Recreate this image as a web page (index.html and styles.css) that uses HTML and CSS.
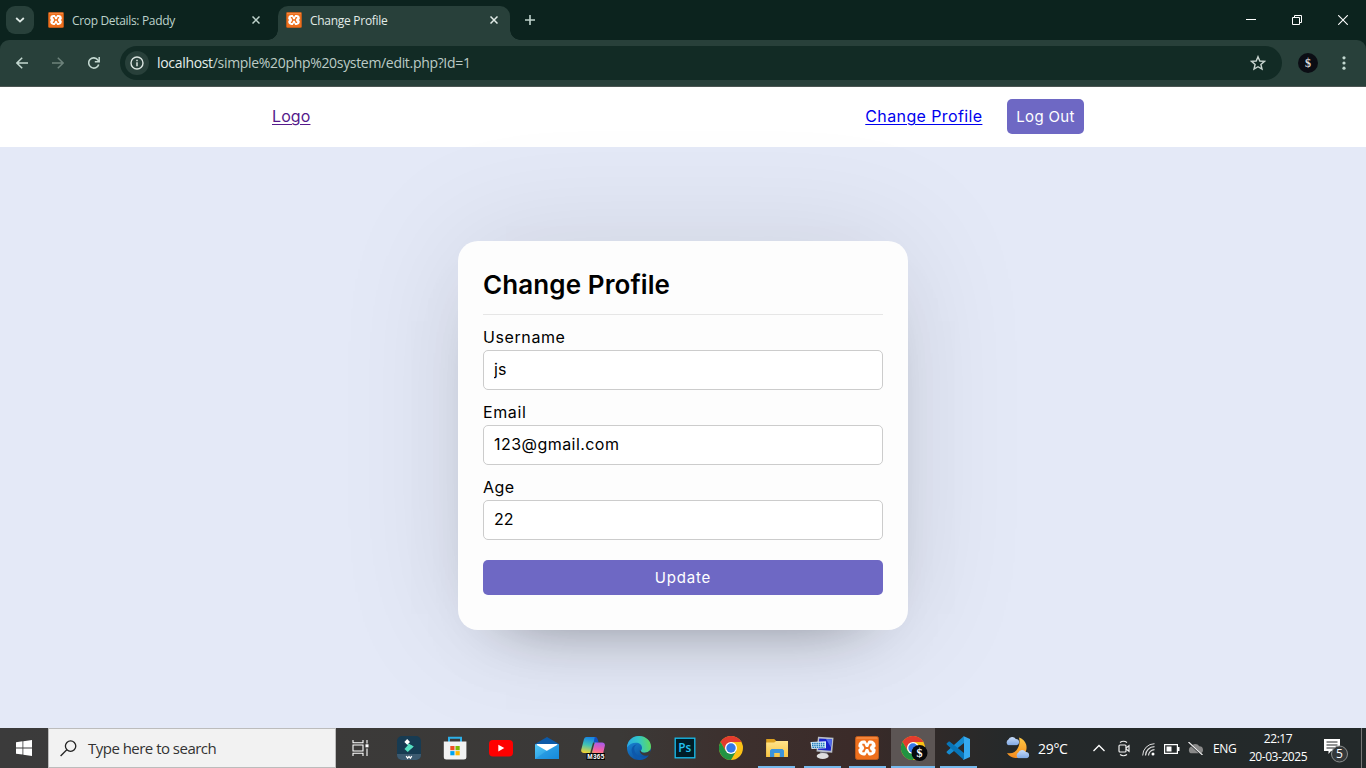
FILE: index.html
```html
<!DOCTYPE html>
<html lang="en">
<head>
<meta charset="utf-8">
<title>Change Profile</title>
<link rel="stylesheet" href="styles.css">
</head>
<body>
<svg class="defs" width="0" height="0" aria-hidden="true">
  <defs>
    <linearGradient id="edgeA" x1="0" y1="0.5" x2="1" y2="0.4"><stop offset="0" stop-color="#2aa9e4"/><stop offset="0.5" stop-color="#32c6c8"/><stop offset="1" stop-color="#62da57"/></linearGradient>
    <linearGradient id="edgeB" x1="0" y1="0" x2="0.6" y2="1"><stop offset="0" stop-color="#1b91df"/><stop offset="1" stop-color="#0c4d9b"/></linearGradient>
    <linearGradient id="copA" x1="0.5" y1="0" x2="0.3" y2="1"><stop offset="0" stop-color="#1684e5"/><stop offset="0.5" stop-color="#42c3b3"/><stop offset="1" stop-color="#f2d332"/></linearGradient>
    <linearGradient id="copB" x1="0.6" y1="0" x2="0.4" y2="1"><stop offset="0" stop-color="#a85ae8"/><stop offset="0.6" stop-color="#ee5eab"/><stop offset="1" stop-color="#ff8c70"/></linearGradient>
    <linearGradient id="mailG" x1="0" y1="0" x2="1" y2="1"><stop offset="0" stop-color="#53c8f6"/><stop offset="1" stop-color="#168bdc"/></linearGradient>
    <linearGradient id="foldG" x1="0" y1="0" x2="0" y2="1"><stop offset="0" stop-color="#ffe48b"/><stop offset="1" stop-color="#f8c544"/></linearGradient>
    <linearGradient id="moonG" x1="0" y1="0" x2="0" y2="1"><stop offset="0" stop-color="#ffc945"/><stop offset="1" stop-color="#f48a1d"/></linearGradient>
    <linearGradient id="cloudG" x1="0" y1="0" x2="0" y2="1"><stop offset="0" stop-color="#c8dcf8"/><stop offset="1" stop-color="#7fa8e3"/></linearGradient>
    <symbol id="xampp" viewBox="0 0 24 24">
      <rect x="0.5" y="0.5" width="23" height="23" rx="2" fill="#ee6f1c" stroke="#bd5a1c"/>
      <path d="M1.5 2h21" stroke="#fa9c5b"/>
      <rect x="3.4" y="4.6" width="17.2" height="14.8" rx="5" fill="#fff"/>
      <path d="M10 4h4l-2 3.4zM10 20h4l-2-3.4zM3 10.600l2 1.400-2 1.400zM21 10.600 19 12l2 1.400z" fill="#ee6f1c"/>
      <path d="M7.300 8.600h1.500l1.500 3.400-1.500 3.400H7.300M16.700 8.600h-1.500L13.700 12l1.500 3.400h1.500M10 12h4" fill="none" stroke="#ee6f1c" stroke-width="1.900"/>
    </symbol>
    <symbol id="chrome" viewBox="0 0 24 24">
      <circle cx="12" cy="12" r="12" fill="#fbc116"/>
      <path d="M12 6h10.4A12 12 0 0 0 1.6 6l5.2 9z" fill="#e33b2e"/>
      <path d="M1.6 6A12 12 0 0 0 12 24l5.2-9H6.8z" fill="#229342"/>
      <circle cx="12" cy="12" r="6" fill="#fff"/><circle cx="12" cy="12" r="4.7" fill="#3478e8"/>
    </symbol>
    <symbol id="cloud" viewBox="0 0 18 11"><path d="M4 11a4 4 0 0 1 0-7 5 5 0 0 1 9-.5A3.8 3.8 0 0 1 14 11z"/></symbol>
  </defs>
</svg>

<header class="browser">
  <div class="tabs">
    <button class="tabsearch" aria-label="Search tabs"><svg width="10" height="6" viewBox="0 0 10 6"><path d="M1.2 1 5 4.6 8.8 1" fill="none" stroke="#dfeae6" stroke-width="1.8"/></svg></button>
    <div class="tab idle">
      <svg width="16" height="16"><use href="#xampp"/></svg><span class="title t1">Crop Details: Paddy</span>
      <svg class="x" width="8" height="8" viewBox="0 0 8 8"><path d="M.5.5l7 7M7.5.5l-7 7" stroke="#bfd3cc" stroke-width="1.5"/></svg>
    </div>
    <div class="tab active">
      <svg width="16" height="16"><use href="#xampp"/></svg><span class="title t2">Change Profile</span>
      <svg class="x" width="8" height="8" viewBox="0 0 8 8"><path d="M.5.5l7 7M7.5.5l-7 7" stroke="#e2ebe7" stroke-width="1.5"/></svg>
    </div>
    <svg class="plus" width="10" height="10" viewBox="0 0 10 10"><path d="M5 0v10M0 5h10" stroke="#bfd3cc" stroke-width="1.6"/></svg>
    <div class="winctl">
      <svg width="10" height="10" viewBox="0 0 10 10"><path d="M0 4.5h10" stroke="#fff"/></svg>
      <svg width="10" height="10" viewBox="0 0 10 10"><path d="M.5 2.5h7v7h-7zM2.5 2.5v-2h7v7h-2" fill="none" stroke="#fff"/></svg>
      <svg width="10" height="10" viewBox="0 0 10 10"><path d="M.2.2l9.6 9.6M9.8.2.2 9.8" stroke="#fff" stroke-width="1.1"/></svg>
    </div>
  </div>
  <div class="toolbar">
    <svg width="12" height="12" viewBox="0 0 12 12"><path d="M12 6H1M6.2.7.9 6l5.3 5.3" fill="none" stroke="#c3d8d0" stroke-width="1.5"/></svg>
    <svg width="12" height="12" viewBox="0 0 12 12"><path d="M0 6h11M5.8.7 11.1 6l-5.3 5.3" fill="none" stroke="#6d827b" stroke-width="1.5"/></svg>
    <svg width="12" height="12" viewBox="0 0 12 12"><path d="M10.7 7.4A5.1 5.1 0 1 1 9.9 2.9L11 4.2" fill="none" stroke="#c3d8d0" stroke-width="1.6"/><path d="M11.2 0v4.7H6.8" fill="none" stroke="#c3d8d0" stroke-width="1.5"/></svg>
    <div class="omnibox">
      <span class="info"><svg width="14" height="14" viewBox="0 0 14 14"><circle cx="7" cy="7" r="6" fill="none" stroke="#dbe5e1" stroke-width="1.4"/><path d="M7 6.2v4M7 3.7v1.5" stroke="#dbe5e1" stroke-width="1.5"/></svg></span>
      <span class="url"><b>localhost</b>/simple%20php%20system/edit.php?Id=1</span>
      <svg class="star" width="16" height="16" viewBox="0 0 16 16"><path d="M8 1.7 9.8 6l4.7.4-3.6 3.1 1.1 4.6L8 11.7l-4 2.4 1.1-4.6L1.5 6.4 6.2 6z" fill="none" stroke="#c9d5d0" stroke-width="1.4"/></svg>
    </div>
    <span class="avatar">$</span>
    <svg class="dots" width="4" height="14" viewBox="0 0 4 14" fill="#c3d8d0"><circle cx="2" cy="1.8" r="1.6"/><circle cx="2" cy="7" r="1.6"/><circle cx="2" cy="12.2" r="1.6"/></svg>
  </div>
</header>

<main class="page">
  <nav class="nav">
    <a class="logo" href="#home">Logo</a>
    <a class="change" href="#edit">Change Profile</a>
    <button class="btn logout">Log Out</button>
  </nav>
  <div class="container">
    <form class="box">
      <h1>Change Profile</h1>
      <div class="field"><label class="l-user" for="u">Username</label><input id="u" class="i-user" value="js"></div>
      <div class="field"><label class="l-mail" for="e">Email</label><input id="e" class="i-mail" value="123@gmail.com"></div>
      <div class="field"><label class="l-age" for="a">Age</label><input id="a" class="i-age" value="22"></div>
      <button class="btn update" type="button">Update</button>
    </form>
  </div>
</main>

<footer class="taskbar">
  <div class="start"><svg width="16" height="16" viewBox="0 0 16 16" fill="#fff"><path d="M0 2.2 6.5 1.3v6.2H0zM7.3 1.2 16 0v7.5H7.3zM0 8.4h6.5v6.2L0 13.7zM7.3 8.4H16V16l-8.7-1.2z"/></svg></div>
  <div class="search"><svg width="17" height="17" viewBox="0 0 17 17"><circle cx="10.6" cy="6.1" r="5.2" fill="none" stroke="#222" stroke-width="1.3"/><path d="M6.8 9.8.6 16" stroke="#222" stroke-width="1.3"/></svg><span>Type here to search</span></div>
  <div class="apps">
    <div class="app first"><svg width="18" height="16" viewBox="0 0 18 16" fill="none" stroke="#fff" stroke-width="1.1"><path d="M1 0v2.7h10V0M1 16v-2.7h10V16M1 5h10v6H1zM15 0v3.5M15 8.5V16"/><path d="M13.5 4.3h3v3h-3z" fill="#fff" stroke="none"/></svg></div>
    <div class="app"><svg width="24" height="24" viewBox="0 0 24 24"><rect width="24" height="24" rx="5" fill="#173b52"/><path d="M0 18h24v1a5 5 0 0 1-5 5H5a5 5 0 0 1-5-5z" fill="#3c5a70"/><path d="m12 8 4.700 2.600-6 5.300-3.200-3z" fill="#55dfc1"/><path d="m8.500 6 8 4.500-3 2.500z" fill="#55dfc1"/><path d="M10.2 3.1 13 5.9 10.2 8.7 7.4 5.9z" fill="#fff"/><path d="M9.2 20.2l1.4 2 1.4-1.6 1.4 1.6 1.4-2" fill="none" stroke="#fff" stroke-width="1.3"/></svg></div>
    <div class="app"><svg width="24" height="24" viewBox="0 0 24 24"><path d="M6 6V1.8h12V6" fill="none" stroke="#2db0e8" stroke-width="2"/><path d="M.8 5.5h22.6V21a2.5 2.5 0 0 1-2.5 2.5H3.3A2.5 2.5 0 0 1 .8 21z" fill="#f2f2f2"/><path fill="#f04e23" d="M7.3 10h4.2v4.2H7.3z"/><path fill="#7eb900" d="M12.5 10h4.2v4.2h-4.2z"/><path fill="#00a3ef" d="M7.3 15.1h4.2v4.2H7.3z"/><path fill="#ffb800" d="M12.5 15.1h4.2v4.2h-4.2z"/></svg></div>
    <div class="app"><svg width="24" height="24" viewBox="0 0 24 24"><rect y="4" width="24" height="16.5" rx="4" fill="#f00"/><path d="m9.3 8.8 6 3.3-6 3.3z" fill="#fff"/></svg></div>
    <div class="app"><svg width="24" height="24" viewBox="0 0 24 24"><path d="M0 8 12 1l12 7v5H0z" fill="#0c5aa8"/><path d="M1.500 8h21v7h-21z" fill="#fff"/><path d="M0 8l12 7 12-7v15H0z" fill="url(#mailG)"/><path d="m0 23 12-8.4L24 8v15z" fill="#1687d9" opacity=".45"/></svg></div>
    <div class="app"><svg width="24" height="24" viewBox="0 0 24 24"><path d="M5.5 1h8a2.6 2.6 0 0 1 2.5 3.4L13 15a3 3 0 0 1-3 2H3c-2.2 0-3.3-1.5-2.7-3.6L3 3a3 3 0 0 1 2.5-2z" fill="url(#copA)"/><path d="M13.8 1c2 0 2.6 1.3 3.1 3l.8 2.6h-5.1z" fill="#144fc2"/><path d="M14.4 6.6h6.8c2 0 3.1 1.6 2.6 3.4L22 18H11l2-9z" fill="url(#copB)"/><path d="m12.800 6.600-2.800 10.400" stroke="#3b3937" stroke-width="1.500"/><rect x="5.5" y="17" width="18.5" height="7" fill="#050505"/><text x="6.3" y="22.8" class="m365" textLength="17">M365</text></svg></div>
    <div class="app"><svg width="24" height="24" viewBox="0 0 24 24"><circle cx="12" cy="12" r="12" fill="url(#edgeB)"/><path d="M0 11.5C.5 4.5 5.6 0 12 0c7 0 12 5 12 10.6 0 4-3 6.2-6.3 6.2-2.6 0-4-1-3.8-2 .2-.7 1.1-1.2 1.1-3 0-3-2.7-5-6.2-5C5 6.800 2 8.600 0 11.500z" fill="url(#edgeA)"/><path d="M9.800 8.500c-2 1-3 3-2.400 5.800.9 4.200 5 7.400 9.600 7.100 2.500-.2 4.200-1.100 5.600-2.600-2.100 3.100-5.800 5.200-10.200 5.200C6 22 3.600 15 5 12c1-2.300 3-3.500 4.800-3.500z" fill="#0d58ab"/><path d="M14 14.700c-.2 1.200 1.400 2.100 3.700 2.100 2.300 0 4.200-.9 5.400-2.500l.9 2.600-2.100 2.400c-4.200 1.100-8.300-.3-9.400-4.600z" fill="#3b3937"/></svg></div>
    <div class="app"><svg width="22" height="22" viewBox="0 0 22 22"><rect x="1.200" y="1.200" width="19.600" height="19.600" fill="#001d27" stroke="#18bff0" stroke-width="1.300"/><text x="4.300" y="15.300" class="ps" textLength="13" lengthAdjust="spacingAndGlyphs">Ps</text></svg></div>
    <div class="app"><svg width="24" height="24"><use href="#chrome"/></svg></div>
    <div class="app run"><svg width="24" height="24" viewBox="0 0 24 24"><path d="M1.200 3h8l2 2H23v16H1.200z" fill="#dca01f"/><path d="M1.200 6.500h8l2-1.500H23v16H1.200z" fill="url(#foldG)"/><path d="M5 21v-6.500L6.500 13h11l1.500 1.500V21h-4.200v-4H9.200v4z" fill="#3b94dc"/></svg></div>
    <div class="app run"><svg width="24" height="24" viewBox="0 0 24 24"><path d="m8 .8 15.500 1-1.300 15-15.700-1.300z" fill="#b9bfca"/><path d="m9.300 2.500 12.600.8-1.100 11.500-12.800-1z" fill="#1721ca"/><path d="M16 3l6 .3-1.100 8z" fill="#4f6bec"/><path d="m10 16 7 .5 1 3h-7z" fill="#7d828d"/><ellipse cx="12.700" cy="20" rx="6" ry="3" fill="#dedede"/><path d="m.5 6 15.500-.7v7L1.500 13z" fill="#d7edfa"/><path d="M2 7.500h13M2 9.500h13M2.500 11.400h12" stroke="#237dbb" stroke-width="1.300" stroke-dasharray="1.500 .7"/></svg></div>
    <div class="app run"><svg width="24" height="24"><use href="#xampp"/></svg></div>
    <div class="app run current"><svg width="27" height="26" viewBox="0 0 27 26"><svg y="1" width="24" height="24"><use href="#chrome"/></svg><circle cx="18.500" cy="18" r="8" fill="#07080b"/><text x="18.500" y="22" text-anchor="middle" class="dollar">$</text></svg></div>
    <div class="app run"><svg width="24" height="24" viewBox="0 0 24 24"><path d="M18 0 1 15.300c-.6.500-.6 1.100 0 1.600l1.300 1.200c.5.500 1 .5 1.600.1L18 7z" fill="#168bd0"/><path d="M18 24 1 8.700c-.6-.500-.6-1.100 0-1.600l1.300-1.200c.5-.500 1-.5 1.600-.1L18 17z" fill="#0875b8"/><path d="M17.300 0 24 3v18l-6.700 3c-.7.100.7-.6.700-1.700V1.700C18 .6 17.300 0 17.300 0z" fill="#35a9ef"/></svg></div>
  </div>
  <div class="tray">
    <svg class="weather" width="25" height="24" viewBox="0 0 25 24"><path d="M14 1.500a10.500 10.500 0 1 1-12 15.400c7.500 2.600 14.600-5.900 12-15.400z" fill="url(#moonG)"/><use href="#cloud" x="0" y="0" width="15" height="9.500" fill="url(#cloudG)"/><use href="#cloud" x="10" y="13" width="15" height="9.500" fill="url(#cloudG)"/></svg>
    <span class="temp">29°C</span>
    <svg class="chev" width="12" height="8" viewBox="0 0 12 8"><path d="M.5 7 6 1.500 11.500 7" fill="none" stroke="#fff" stroke-width="1.300"/></svg>
    <svg class="meet" width="13" height="17" viewBox="0 0 13 17" fill="none" stroke="#eee" stroke-width="1.200"><path d="M2 2.500q3.500-2.500 7 0M2 14.500q3.500 2.500 7 0"/><rect x="1" y="5" width="7" height="7" rx="1"/><path d="m8 8 3-2.200v5.400L8 9"/></svg>
    <svg class="wifi" width="13" height="13" viewBox="0 0 13 13" fill="none" stroke="#ddd"><path d="M.7 12.500A11.800 11.800 0 0 1 12.500.7"/><path d="M3.500 12.500a9 9 0 0 1 9-8.800M6.500 12.500a6 6 0 0 1 6-5.800" stroke-width="1.200"/><circle cx="11" cy="11" r="1.500" fill="#fff" stroke="none"/></svg>
    <svg class="batt" width="16" height="10" viewBox="0 0 16 10"><path d="M.6.6h12.800v8.800H.6z" fill="none" stroke="#fff" stroke-width="1.200"/><path d="M2.500 2.500h5v5h-5zM14 3h1.500v4H14z" fill="#fff"/></svg>
    <svg class="onedrive" width="17" height="13" viewBox="0 0 17 13"><use href="#cloud" y="1" width="17" height="10.500" fill="#898989"/><path d="m1 0 14 13" stroke="#25282a" stroke-width="2"/><path d="m1.500 0 14 13" stroke="#eee" stroke-width="1.200"/></svg>
    <span class="lang">ENG</span>
    <div class="clock"><span class="time">22:17</span><span class="date">20-03-2025</span></div>
    <svg class="note" width="26" height="26" viewBox="0 0 26 26"><path d="M1 2h16v12H8l-2.500 3v-3H1z" fill="#fff"/><path d="M3.500 5h11M3.500 8h11M3.500 11h8" stroke="#24292a"/><circle cx="16.500" cy="17" r="8" fill="#34383a" stroke="#8b8e8e"/><text x="16.500" y="21.200" text-anchor="middle" class="five">5</text></svg>
  </div>
</footer>
</body>
</html>
```
FILE: styles.css
```css
* { box-sizing: border-box; margin: 0; padding: 0; }
body { width: 1366px; height: 768px; overflow: hidden; display: flex; flex-direction: column; font-family: "Open Sans", "Noto Sans", sans-serif; }
.defs { position: absolute; }
svg { display: block; flex: none; }
button { border: 0; }

/* Browser frame */
.browser { height: 87px; background: #0c231e; border-bottom: 1px solid #4b5552; flex: none; }
.tabs { height: 40px; display: flex; align-items: center; padding-left: 6px; }
.tabsearch { width: 28px; height: 28px; border-radius: 9px; background: #28403a; display: grid; place-items: center; }
.tab { display: flex; align-items: center; font-size: 12px; white-space: nowrap; }
.title { flex: 1; margin-left: 8px; }
.idle { width: 244px; padding: 0 18px 0 14px; color: #bdd2cb; }
.t1 { letter-spacing: -.33px; }
.t2 { letter-spacing: -.28px; }
.active { width: 232px; height: 34px; align-self: flex-end; padding: 0 12px 6px 8px; border-radius: 10px 10px 0 0; background: #28403a; color: #e2ebe7; position: relative; }
.active::before, .active::after { content: ""; position: absolute; bottom: 0; width: 10px; height: 10px; }
.active::before { left: -10px; background: radial-gradient(circle at 0 0, transparent 9.500px, #28403a 10px); }
.active::after { right: -10px; background: radial-gradient(circle at 100% 0, transparent 9.500px, #28403a 10px); }
.plus { margin-left: 15px; }
.winctl { margin-left: auto; padding-right: 18px; display: flex; gap: 36px; }
.toolbar { height: 46px; display: flex; align-items: center; padding: 0 20px 0 16px; gap: 24px; background: #28403a; border-radius: 9px 9px 0 0; }
.omnibox { width: 1162px; height: 34px; margin-left: -4px; border-radius: 17px; background: #122b25; display: flex; align-items: center; padding: 0 16px 0 5px; }
.info { width: 24px; height: 24px; border-radius: 50%; background: #28403a; display: grid; place-items: center; }
.url { flex: 1; margin-left: 8px; padding-bottom: 1px; font-size: 14px; letter-spacing: -.32px; color: #bccbc5; }
.url b { font-weight: 400; color: #e5eeea; }
.avatar { width: 20px; height: 20px; margin-left: -8px; border-radius: 50%; background: #0b0d14; color: #ddd; font: bold 12px/20px "Liberation Serif", serif; text-align: center; }
.dots { margin-left: auto; }

/* Page */
.page { height: 641px; background: #e4e9f7; font-family: Inter, sans-serif; font-size: 16px; overflow: hidden; }
.nav { height: 60px; display: flex; align-items: center; padding: 0 282px 2px 272px; background: #fff; }
.logo { color: #551a8b; margin-right: auto; letter-spacing: .1px; }
.change { color: #0000ee; margin-right: 24.600px; letter-spacing: .38px; }
.nav a { text-underline-offset: 2px; text-decoration-thickness: 1px; }
.btn { height: 35px; border-radius: 5px; background: rgba(76,68,182,.808); color: #fff; font: 15px Inter, sans-serif; }
.logout { width: 77px; letter-spacing: .35px; }
.container { height: 581px; display: flex; justify-content: center; align-items: flex-start; padding-top: 94px; }
.box { width: 450px; height: 389px; padding: 25px; border-radius: 20px; background: #fdfdfd; box-shadow: 0 0 128px 0 rgba(0,0,0,.1), 0 32px 64px -48px rgba(0,0,0,.5); }
.box h1 { height: 49px; border-bottom: 1px solid #e6e6e6; margin-bottom: 10px; font-size: 26px; line-height: 37px; font-weight: 600; letter-spacing: .1px; }
.field { height: 65px; margin-bottom: 10px; display: flex; flex-direction: column; }
.field label { line-height: 25px; }
.field input { height: 40px; border: 1px solid #ccc; border-radius: 5px; padding: 0 10px 2px; font: 16px Inter, sans-serif; color: #000; background: #fff; }
.l-user { letter-spacing: .6px; }
.l-mail { letter-spacing: .6px; }
.l-age { letter-spacing: .5px; }
.field .i-mail { letter-spacing: .45px; }
.update { width: 100%; margin-top: 20px; display: block; letter-spacing: .8px; }

/* Taskbar */
.taskbar { height: 40px; display: flex; color: #fff; background: linear-gradient(90deg, #3b3b3b 0, #3b3937 620px, #3c302e 730px, #3b2b29 850px, #302928 930px, #25292a 1010px, #23292a 1366px); }
.start { width: 48px; display: grid; place-items: center; }
.search { width: 288px; display: flex; align-items: center; padding-left: 11px; gap: 11px; background: #f2f2f2; border: 1px solid #bcbcbc; color: #333; font-size: 15px; }
.search span { letter-spacing: -.52px; white-space: nowrap; }
.apps { width: 644px; margin-left: 1px; display: flex; }
.app { width: 46px; flex: none; display: flex; align-items: center; justify-content: center; }
.first { width: 49px; padding-right: 2px; }
.run { width: 45.400px; background: linear-gradient(#76b9ed, #76b9ed) center bottom / 37px 2px no-repeat; }
.current { width: 44px; margin: 0 .7px; padding-left: 3px; background: linear-gradient(#76b9ed, #76b9ed) bottom / 100% 2px no-repeat, #5c5554; }
.m365 { font: bold 6.500px "Liberation Sans", sans-serif; fill: #fff; }
.ps { font: 600 12px "Open Sans", sans-serif; fill: #22c3f3; }
.dollar { font: bold 12px "Liberation Serif", serif; fill: #fff; }
.tray { flex: 1; display: flex; align-items: center; margin-right: 4px; border-right: 1px solid #777; white-space: nowrap; }
.weather { margin-left: 24px; }
.temp { width: 48px; margin-left: 8px; font-size: 14px; letter-spacing: -.3px; }
.chev { margin-left: 7px; }
.meet { margin-left: 13px; }
.wifi { margin-left: 11px; margin-top: 3px; }
.batt { margin-left: 9px; margin-top: 1px; }
.onedrive { margin-left: 7px; }
.lang { width: 27px; margin-left: 9px; font-size: 12px; letter-spacing: -.35px; }
.clock { width: 74px; margin-left: 1px; display: flex; flex-direction: column; align-items: center; font-size: 12px; line-height: 18px; }
.time, .date { letter-spacing: -.45px; }
.note { margin-left: 8px; margin-top: 3px; }
.five { font: 12px "Open Sans", sans-serif; fill: #fff; }
```
